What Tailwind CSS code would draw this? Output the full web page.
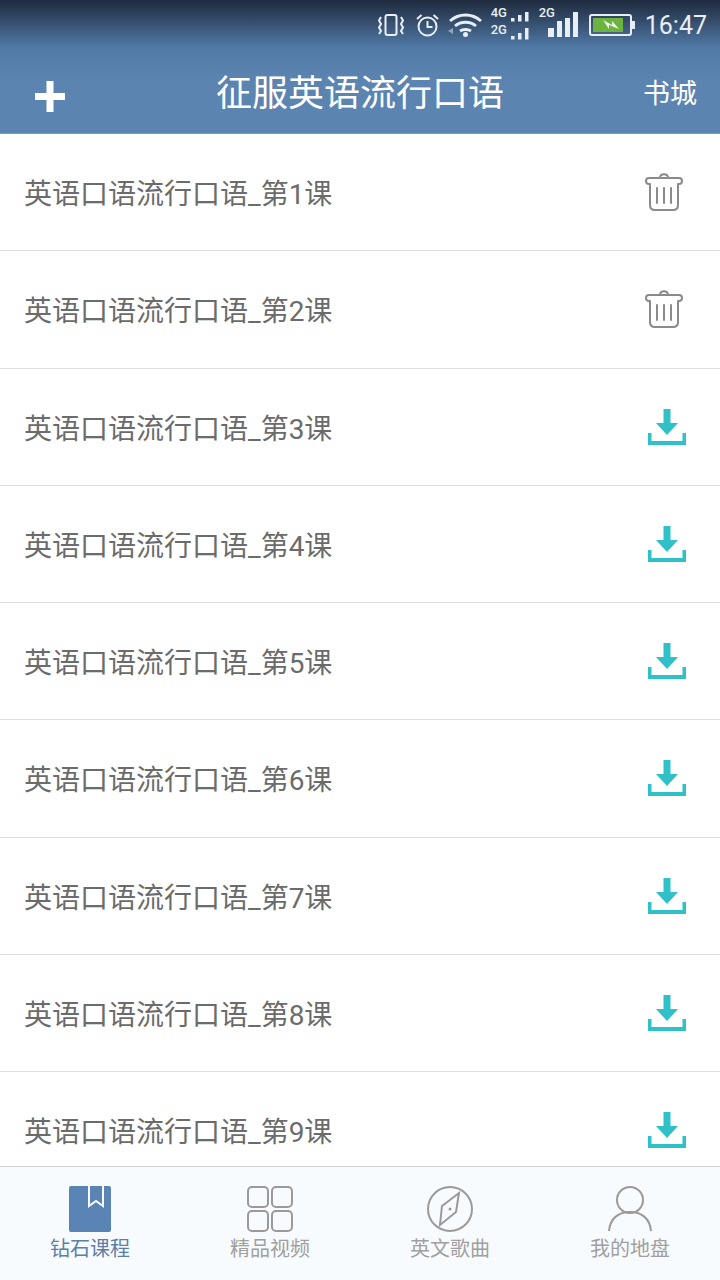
<!DOCTYPE html>
<html lang="zh-CN">
<head>
  <meta charset="UTF-8">
  <meta name="viewport" content="width=device-width, initial-scale=1.0">
  <title>征服英语流行口语</title>
  <script src="https://cdn.jsdelivr.net/npm/@tailwindcss/browser@4"></script>
</head>
<body class="bg-white font-['Roboto','Noto_Sans_CJK_SC',sans-serif]">
  <div class="w-[720px] h-[1280px] flex flex-col overflow-hidden">

    <!-- status bar + title -->
    <header class="h-[134px] shrink-0 flex flex-col bg-gradient-to-b from-[#1f2b3e] via-[#5079a6] via-[35%] to-[#5c84b1] to-[60%] text-white border-b border-[#7d9bbd]">
      <div class="h-[50px] flex items-center justify-end pr-[13px] text-[#e8eef5]">
        <svg class="w-[27px] h-[24px] mr-[10px]" viewBox="0 0 27 24" fill="none" stroke="currentColor" stroke-width="2"><rect x="7.500" y="2" width="11" height="20" rx="2"/><path d="M3 4L1 7.500l2 3.500-2 3.500 2 3.500-2 3M23 4l2 3.500-2 3.500 2 3.500-2 3.500 2 3"/></svg>
        <svg class="w-[25px] h-[24px] mr-[8px]" viewBox="0 0 25 24" fill="none" stroke="currentColor" stroke-width="2"><circle cx="12.500" cy="13.500" r="9"/><path d="M12.500 8v6h5M2 6l4.500-4M23 6l-4.500-4"/></svg>
        <svg class="w-[35px] h-[24px] mr-[8px]" viewBox="0 0 35 24" fill="none" stroke="currentColor" stroke-width="2.800"><path d="M2 8c9-8 22-8 31 0M7 13c6-5 15-5 21 0M12 18c3-2 8-2 11 0"/><circle cx="17.500" cy="21.500" r="2.500" fill="currentColor" stroke="none"/><path d="M0 18l5-3v6z" fill="currentColor" stroke="none" opacity="0.500"/></svg>
        <div class="w-[39px] h-[34px] relative mr-[9px]">
          <span class="absolute left-0 top-[-3px] text-[13px] leading-[16px] font-medium">4G</span>
          <span class="absolute left-0 top-[14px] text-[13px] leading-[16px] font-medium">2G</span>
          <svg class="absolute right-0 top-0 w-[20px] h-[34px]" viewBox="0 0 20 34" fill="currentColor"><rect x="1" y="10" width="3.500" height="3.500"/><rect x="8" y="7" width="3.500" height="6.500"/><rect x="15" y="4" width="3.500" height="9.500"/><rect x="1" y="28" width="3.500" height="3.500"/><rect x="8" y="25" width="3.500" height="6.500"/><rect x="15" y="20" width="3.500" height="11.500"/></svg>
        </div>
        <div class="w-[39px] h-[34px] relative mr-[11px]">
          <span class="absolute left-0 top-[-3px] text-[13px] leading-[16px] font-medium">2G</span>
          <svg class="absolute right-0 top-0 w-[30px] h-[34px]" viewBox="0 0 30 34" fill="currentColor"><rect x="0" y="20" width="6" height="9"/><rect x="9" y="13" width="5" height="16"/><rect x="17" y="10" width="5" height="19"/><rect x="25" y="4" width="5" height="25"/></svg>
        </div>
        <svg class="w-[46px] h-[24px] mr-[10px]" viewBox="0 0 46 24"><rect x="1" y="2" width="41" height="20" rx="2" fill="none" stroke="currentColor" stroke-width="2"/><rect x="4" y="5" width="30" height="14" fill="#6db33f"/><path d="M14 7l9 5 0-4 7 8-10-4 0 4z" fill="#f0f4ea"/><rect x="43" y="8" width="3" height="8" fill="currentColor"/></svg>
        <span class="text-[25px] leading-none">16:47</span>
      </div>
      <div class="flex-1 flex items-center justify-between relative pl-[35px] pr-[23px]">
        <svg class="w-[30px] h-[31px] mt-[9px]" viewBox="0 0 30 31" fill="#fff"><rect x="11.500" y="0" width="7" height="31"/><rect x="0" y="12" width="30" height="7"/></svg>
        <h1 class="absolute left-[216px] top-[21px] text-[36px] leading-[46px] whitespace-nowrap">征服英语流行口语</h1>
        <span class="text-[27px] leading-none mt-[5px]">书城</span>
      </div>
    </header>

    <!-- lessons -->
    <main class="flex-1 min-h-0 overflow-hidden">
      <div class="h-[117.25px] flex items-center justify-between border-b border-[#dedede] pl-[24px] pr-[34px]">
        <span class="text-[28px] text-[#6b6b6b] mt-[6px]">英语口语流行口语_第1课</span>
        <svg class="w-[38px] h-[38px] mr-[3px] text-[#8a8a8a]" viewBox="0 0 38 38" fill="none" stroke="currentColor" stroke-width="2" stroke-linecap="round"><path d="M15 5c0-5 8-5 8 0M1 8c0-2 1-3 3-3h30c2 0 3 1 3 3 0 2-1 3-3 3h-1M5 11H4C2 11 1 10 1 8M5 11v21c0 3 2 5 5 5h18c3 0 5-2 5-5V11M12 15v15M19 15v15M26 15v15"/></svg>
      </div>
      <div class="h-[117.25px] flex items-center justify-between border-b border-[#dedede] pl-[24px] pr-[34px]">
        <span class="text-[28px] text-[#6b6b6b] mt-[6px]">英语口语流行口语_第2课</span>
        <svg class="w-[38px] h-[38px] mr-[3px] text-[#8a8a8a]" viewBox="0 0 38 38" fill="none" stroke="currentColor" stroke-width="2" stroke-linecap="round"><path d="M15 5c0-5 8-5 8 0M1 8c0-2 1-3 3-3h30c2 0 3 1 3 3 0 2-1 3-3 3h-1M5 11H4C2 11 1 10 1 8M5 11v21c0 3 2 5 5 5h18c3 0 5-2 5-5V11M12 15v15M19 15v15M26 15v15"/></svg>
      </div>
      <div class="h-[117.25px] flex items-center justify-between border-b border-[#dedede] pl-[24px] pr-[34px]">
        <span class="text-[28px] text-[#6b6b6b] mt-[6px]">英语口语流行口语_第3课</span>
        <svg class="w-[38px] h-[36px] text-[#2fc0c8]" viewBox="0 0 38 36" fill="currentColor"><path d="M15.500 0h7v14H30L19 26 8 14h7.500z"/><path d="M0 24h3.500v8h31v-8H38v12H0z"/></svg>
      </div>
      <div class="h-[117.25px] flex items-center justify-between border-b border-[#dedede] pl-[24px] pr-[34px]">
        <span class="text-[28px] text-[#6b6b6b] mt-[6px]">英语口语流行口语_第4课</span>
        <svg class="w-[38px] h-[36px] text-[#2fc0c8]" viewBox="0 0 38 36" fill="currentColor"><path d="M15.500 0h7v14H30L19 26 8 14h7.500z"/><path d="M0 24h3.500v8h31v-8H38v12H0z"/></svg>
      </div>
      <div class="h-[117.25px] flex items-center justify-between border-b border-[#dedede] pl-[24px] pr-[34px]">
        <span class="text-[28px] text-[#6b6b6b] mt-[6px]">英语口语流行口语_第5课</span>
        <svg class="w-[38px] h-[36px] text-[#2fc0c8]" viewBox="0 0 38 36" fill="currentColor"><path d="M15.500 0h7v14H30L19 26 8 14h7.500z"/><path d="M0 24h3.500v8h31v-8H38v12H0z"/></svg>
      </div>
      <div class="h-[117.25px] flex items-center justify-between border-b border-[#dedede] pl-[24px] pr-[34px]">
        <span class="text-[28px] text-[#6b6b6b] mt-[6px]">英语口语流行口语_第6课</span>
        <svg class="w-[38px] h-[36px] text-[#2fc0c8]" viewBox="0 0 38 36" fill="currentColor"><path d="M15.500 0h7v14H30L19 26 8 14h7.500z"/><path d="M0 24h3.500v8h31v-8H38v12H0z"/></svg>
      </div>
      <div class="h-[117.25px] flex items-center justify-between border-b border-[#dedede] pl-[24px] pr-[34px]">
        <span class="text-[28px] text-[#6b6b6b] mt-[6px]">英语口语流行口语_第7课</span>
        <svg class="w-[38px] h-[36px] text-[#2fc0c8]" viewBox="0 0 38 36" fill="currentColor"><path d="M15.500 0h7v14H30L19 26 8 14h7.500z"/><path d="M0 24h3.500v8h31v-8H38v12H0z"/></svg>
      </div>
      <div class="h-[117.25px] flex items-center justify-between border-b border-[#dedede] pl-[24px] pr-[34px]">
        <span class="text-[28px] text-[#6b6b6b] mt-[6px]">英语口语流行口语_第8课</span>
        <svg class="w-[38px] h-[36px] text-[#2fc0c8]" viewBox="0 0 38 36" fill="currentColor"><path d="M15.500 0h7v14H30L19 26 8 14h7.500z"/><path d="M0 24h3.500v8h31v-8H38v12H0z"/></svg>
      </div>
      <div class="h-[117.25px] flex items-center justify-between border-b border-[#dedede] pl-[24px] pr-[34px]">
        <span class="text-[28px] text-[#6b6b6b] mt-[6px]">英语口语流行口语_第9课</span>
        <svg class="w-[38px] h-[36px] text-[#2fc0c8]" viewBox="0 0 38 36" fill="currentColor"><path d="M15.500 0h7v14H30L19 26 8 14h7.500z"/><path d="M0 24h3.500v8h31v-8H38v12H0z"/></svg>
      </div>
    </main>

    <!-- tabs -->
    <nav class="h-[114px] shrink-0 grid grid-cols-4 bg-[#f8fbfe] border-t border-[#d0d0d0] text-[20px] leading-[28px] text-[#a0a0a0]">
      <div class="flex flex-col items-center pt-[19px] text-[#5b7fa6]">
        <svg class="w-[42px] h-[46px]" viewBox="0 0 42 46"><rect width="42" height="46" rx="2" fill="#5a84b3"/><path d="M20 0v20l7-5 7 5V0" fill="none" stroke="#f8fbfe" stroke-width="2"/></svg>
        <span class="mt-[3px]">钻石课程</span>
      </div>
      <div class="flex flex-col items-center pt-[19px]">
        <svg class="w-[46px] h-[46px]" viewBox="0 0 46 46" fill="none" stroke="#9a9a9a" stroke-width="2"><rect x="1" y="1" width="20" height="20" rx="4"/><rect x="25" y="1" width="20" height="20" rx="4"/><rect x="1" y="25" width="20" height="20" rx="4"/><rect x="25" y="25" width="20" height="20" rx="4"/></svg>
        <span class="mt-[3px]">精品视频</span>
      </div>
      <div class="flex flex-col items-center pt-[19px]">
        <svg class="w-[46px] h-[46px]" viewBox="0 0 46 46" fill="none" stroke="#9a9a9a" stroke-width="2"><circle cx="23" cy="23" r="22"/><path d="M32 7l-3 19-16 13 2-19z"/><circle cx="23" cy="23" r="1.500" fill="#9a9a9a" stroke="none"/></svg>
        <span class="mt-[3px]">英文歌曲</span>
      </div>
      <div class="flex flex-col items-center pt-[19px]">
        <svg class="w-[46px] h-[46px]" viewBox="0 0 46 46" fill="none" stroke="#9a9a9a" stroke-width="2"><circle cx="23" cy="14" r="13"/><path d="M2 45c1-13 10-19 21-19s20 6 21 19"/></svg>
        <span class="mt-[3px]">我的地盘</span>
      </div>
    </nav>
  </div>
</body>
</html>
